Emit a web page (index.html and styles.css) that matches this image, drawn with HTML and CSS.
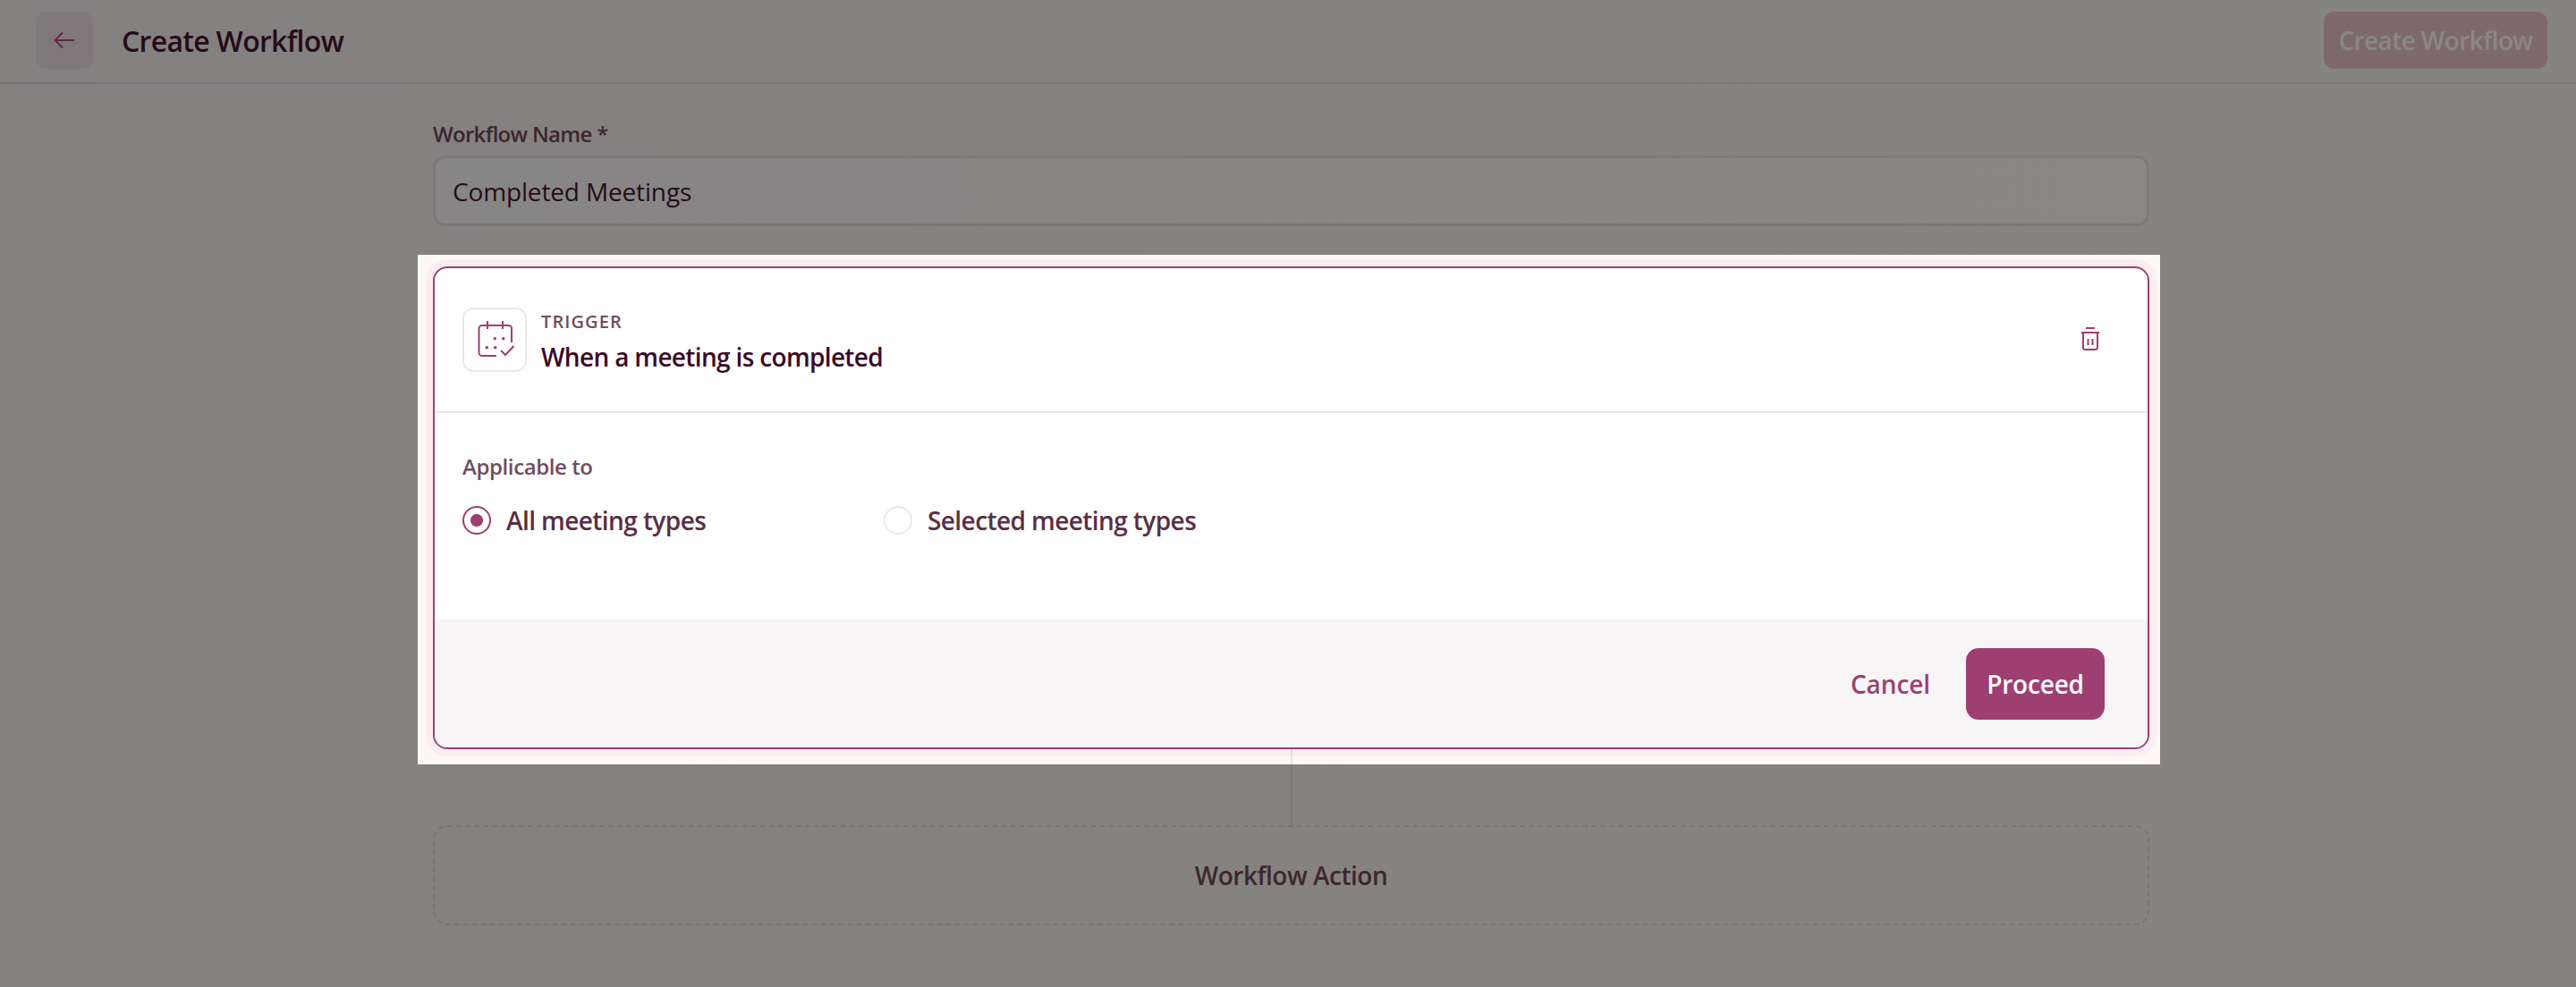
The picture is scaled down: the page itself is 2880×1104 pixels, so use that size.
FILE: index.html
```html
<!DOCTYPE html>
<html lang="en">

<head>
    <meta charset="UTF-8">
    <meta name="viewport" content="width=device-width, initial-scale=1.0">
    <title>Create Workflow</title>
    <link rel="stylesheet" href="styles.css">
</head>

<body>
    <header class="topbar">
        <button class="back-btn" type="button" aria-label="Back">
            <svg width="24" height="20" viewBox="0 0 24 20" fill="none" stroke="currentColor" stroke-width="2">
                <path d="M23 10H2M10 1.500L1.500 10l8.500 8.500"/>
            </svg>
        </button>
        <h1 class="page-title">Create Workflow</h1>
        <button class="create-btn" type="button">Create Workflow</button>
    </header>

    <main class="builder">
        <label class="field-label" for="workflowName">Workflow Name *</label>
        <input class="name-input" id="workflowName" type="text" value="Completed Meetings">

        <div class="spotlight">
            <section class="trigger-card">
                <div class="trigger-head">
                    <div class="trigger-icon">
                        <svg width="44" height="44" viewBox="0 0 44 44" fill="none" stroke="currentColor" stroke-width="2">
                            <path d="M24 40H8a3.500 3.500 0 0 1-3.500-3.500V9.500A3.500 3.500 0 0 1 8 6h29.500A3.500 3.500 0 0 1 41 9.500V25"/>
                            <path d="M14 1v9M31 1v9"/>
                            <path d="M29 34l5 5 9.500-10"/>
                            <g fill="currentColor" stroke="none">
                                <circle cx="22.300" cy="20.700" r="1.800"/>
                                <circle cx="31.700" cy="20.700" r="1.800"/>
                                <circle cx="13.300" cy="30.700" r="1.800"/>
                                <circle cx="22.700" cy="30.700" r="1.800"/>
                            </g>
                        </svg>
                    </div>
                    <div class="trigger-text">
                        <div class="trigger-kicker">TRIGGER</div>
                        <div class="trigger-title">When a meeting is completed</div>
                    </div>
                    <button class="delete-btn" type="button" aria-label="Delete">
                        <svg width="20" height="26" viewBox="0 0 20 26" fill="none" stroke="currentColor" stroke-width="2">
                            <path d="M5 1h10M0 6h20M2 6v16.500A2.500 2.500 0 0 0 4.500 25h11a2.500 2.500 0 0 0 2.500-2.500V6M7.500 13v7M12.500 13v7"/>
                        </svg>
                    </button>
                </div>

                <div class="trigger-body">
                    <div class="applies-label">Applicable to</div>
                    <div class="radio-row">
                        <div class="radio-item">
                            <span class="radio radio-on"></span>
                            <span class="radio-text">All meeting types</span>
                        </div>
                        <div class="radio-item">
                            <span class="radio"></span>
                            <span class="radio-text">Selected meeting types</span>
                        </div>
                    </div>
                </div>

                <div class="trigger-foot">
                    <button class="cancel-btn" type="button">Cancel</button>
                    <button class="proceed-btn" type="button">Proceed</button>
                </div>
            </section>
        </div>

        <div class="connector"></div>
        <div class="action-box">Workflow Action</div>
    </main>

    <div class="overlay"></div>
</body>

</html>
```

FILE: styles.css
```css
* {
    box-sizing: border-box;
}

html, body {
    height: 100%;
}

body {
    margin: 0;
    overflow: hidden;
    background-color: #f8f6f5;
    font-family: "Open Sans", Arial, sans-serif;
    color: #3b0a26;
}

button {
    font-family: inherit;
    border: none;
    background: none;
    padding: 0;
}

.overlay {
    position: fixed;
    inset: 0;
    z-index: 10;
    background: linear-gradient(90deg, rgba(15, 11, 13, 0.5), rgba(20, 18, 10, 0.5));
}

.topbar {
    display: flex;
    align-items: center;
    height: 94px;
    padding: 0 32px 2px 40px;
    border-bottom: 2px solid #e6dfe3;
}

.back-btn {
    display: flex;
    align-items: center;
    justify-content: center;
    width: 64px;
    height: 64px;
    border-radius: 12px;
    background-color: #f1e7eb;
    color: #b83f85;
}

.page-title {
    flex: 1;
    margin: 0 0 0 32px;
    font-size: 32px;
    font-weight: 600;
    letter-spacing: -0.7px;
}

.create-btn {
    width: 250px;
    height: 64px;
    border-radius: 12px;
    background-color: #e8c0d0;
    color: #fff;
    font-size: 28px;
    font-weight: 600;
    letter-spacing: -0.6px;
}

.builder {
    display: flex;
    flex-direction: column;
    padding: 41px 477px 0 484px;
}

.field-label {
    height: 39px;
    font-size: 24px;
    line-height: 30px;
    font-weight: 600;
    letter-spacing: -0.7px;
    color: #6b4050;
}

.name-input {
    height: 79px;
    padding: 0 19px;
    border: 3px solid #e8e2e6;
    border-radius: 14px;
    background-color: #fff;
    font-family: inherit;
    font-size: 28px;
    color: #3b0a26;
    letter-spacing: -0.15px;
}

/* wrapper sits above the overlay and holds the light patch */
.spotlight {
    position: relative;
    z-index: 20;
    margin-top: 45px;
}

.spotlight::before {
    content: '';
    position: absolute;
    inset: -13px -12px -17px -17px;
    background-color: #fdf8f6;
}

.trigger-card {
    position: relative;
    height: 540px;
    display: flex;
    flex-direction: column;
    border: 2px solid #9e3f72;
    border-radius: 16px;
    background-color: #fff;
    box-shadow: 0 0 0 8px #fbeef2;
}

.trigger-head {
    display: flex;
    align-items: center;
    gap: 16px;
    height: 162px;
    padding: 0 32px 0 31px;
    border-bottom: 2px solid #ece7e9;
}

.trigger-icon {
    display: flex;
    align-items: center;
    justify-content: center;
    width: 72px;
    height: 72px;
    border: 2px solid #ece7e9;
    border-radius: 12px;
    color: #9e3f72;
}

.trigger-text {
    flex: 1;
    padding-top: 4px;
}

.trigger-kicker {
    font-size: 20px;
    line-height: 26px;
    font-weight: 600;
    letter-spacing: 1.1px;
    color: #6f4d60;
}

.trigger-title {
    margin-top: 8px;
    font-size: 28px;
    line-height: 36px;
    font-weight: 600;
    letter-spacing: -0.66px;
}

.delete-btn {
    display: flex;
    margin: 0 22px 2px 0;
    color: #9e3f72;
}

.trigger-body {
    flex: 1;
    padding: 44px 32px 0 31px;
}

.applies-label {
    font-size: 24px;
    line-height: 32px;
    font-weight: 600;
    letter-spacing: -0.4px;
    color: #6f4d60;
}

.radio-row {
    display: flex;
    margin-top: 26px;
}

.radio-item {
    display: flex;
    align-items: center;
    gap: 17px;
    width: 471px;
}

.radio {
    width: 32px;
    height: 32px;
    border: 2px solid #ece7e9;
    border-radius: 50%;
}

.radio-on {
    border-color: #9e3f72;
    background: radial-gradient(circle, #9e3f72 6.500px, transparent 7.500px);
}

.radio-text {
    font-size: 28px;
    line-height: 36px;
    font-weight: 600;
    letter-spacing: -0.58px;
    color: #5a2e45;
}

.trigger-foot {
    display: flex;
    align-items: center;
    justify-content: flex-end;
    gap: 40px;
    height: 143px;
    padding: 0 48px 0 0;
    border-radius: 0 0 14px 14px;
    background-color: #f7f5f6;
}

.cancel-btn {
    font-size: 28px;
    font-weight: 600;
    letter-spacing: -0.1px;
    color: #9e3f72;
}

.proceed-btn {
    width: 155px;
    height: 80px;
    border-radius: 14px;
    background-color: #9e3f72;
    color: #fff;
    font-size: 28px;
    font-weight: 600;
    letter-spacing: -0.2px;
}

.connector {
    position: relative;
    z-index: 30;
    align-self: center;
    width: 2px;
    height: 85px;
    background-color: rgba(0, 0, 0, 0.08);
}

.action-box {
    display: flex;
    align-items: center;
    justify-content: center;
    height: 112px;
    border: 2px dashed #e2dcdf;
    border-radius: 16px;
    font-size: 28px;
    font-weight: 600;
    letter-spacing: -0.5px;
    color: #6b4050;
}
```
